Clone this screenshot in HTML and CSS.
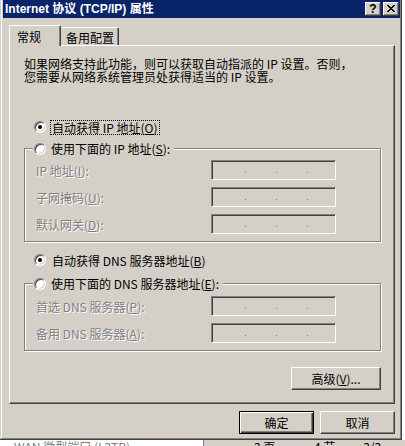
FILE: index.html
```html
<!DOCTYPE html>
<html lang="zh-CN">
<head>
  <meta charset="UTF-8" />
  <title>Internet 协议 (TCP/IP) 属性</title>
  <link rel="stylesheet" href="styles.css">
</head>
<body>

  <div class="window">
    <div class="titlebar">
      <span class="title">Internet 协议 (TCP/IP) 属性</span>
      <div class="cap-buttons">
        <span class="cap-btn help">?</span>
        <span class="cap-btn">
          <svg width="8" height="7" viewBox="0 0 8 7" shape-rendering="crispEdges">
            <path d="M0 0h2v1H0zM6 0h2v1H6zM1 1h2v1H1zM5 1h2v1H5zM2 2h4v1H2zM3 3h2v1H3zM2 4h4v1H2zM1 5h2v1H1zM5 5h2v1H5zM0 6h2v1H0zM6 6h2v1H6z" fill="#000"/>
          </svg>
        </span>
      </div>
    </div>

    <div class="tabs">
      <div class="tab active">常规</div>
      <div class="tab">备用配置</div>
    </div>

    <div class="panel">
      <p class="desc">如果网络支持此功能，则可以获取自动指派的 IP 设置。否则，<br>您需要从网络系统管理员处获得适当的 IP 设置。</p>

      <div class="option first">
        <span class="radio checked"></span>
        <span class="label focus">自动获得 IP 地址(<u>O</u>)</span>
      </div>

      <fieldset class="group">
        <legend><span class="radio"></span><span class="label">使用下面的 IP 地址(<u>S</u>):</span></legend>
        <div class="field">
          <span class="field-label">IP 地址(<u>I</u>):</span>
          <span class="ip-box"><i></i><i></i><i></i></span>
        </div>
        <div class="field">
          <span class="field-label">子网掩码(<u>U</u>):</span>
          <span class="ip-box"><i></i><i></i><i></i></span>
        </div>
        <div class="field">
          <span class="field-label">默认网关(<u>D</u>):</span>
          <span class="ip-box"><i></i><i></i><i></i></span>
        </div>
      </fieldset>

      <div class="option second">
        <span class="radio checked"></span>
        <span class="label">自动获得 DNS 服务器地址(<u>B</u>)</span>
      </div>

      <fieldset class="group dns">
        <legend><span class="radio"></span><span class="label">使用下面的 DNS 服务器地址(<u>E</u>):</span></legend>
        <div class="field">
          <span class="field-label">首选 DNS 服务器(<u>P</u>):</span>
          <span class="ip-box"><i></i><i></i><i></i></span>
        </div>
        <div class="field">
          <span class="field-label">备用 DNS 服务器(<u>A</u>):</span>
          <span class="ip-box"><i></i><i></i><i></i></span>
        </div>
      </fieldset>

      <div class="actions">
        <span class="btn advanced">高级(<u>V</u>)...</span>
      </div>
    </div>

    <div class="dialog-buttons">
      <span class="btn default">确定</span>
      <span class="btn">取消</span>
    </div>
  </div>

  <!-- what is left of the window behind -->
  <div class="under">
    <div class="under-left">WAN 微型端口 (L2TP)</div>
    <div class="under-right">
      <span class="pg">3 页</span>
      <span class="sec">4 节</span>
      <span>3/3</span>
    </div>
  </div>

</body>
</html>
```

FILE: styles.css
```css
body {
  margin: 0;
  background: #fff;
  font-family: "Noto Sans CJK SC", sans-serif;
  font-size: 12px;
  color: #000;
}
u {
  text-decoration: underline;
  text-underline-offset: 1px;
}

/* Ventana */
.window {
  width: 402px;
  height: 440px;
  box-sizing: border-box;
  padding: 0 2px 0 3px;
  background: #d4d0c8;
  box-shadow: inset -1px -1px #404040, inset 1px 0 #d4d0c8, inset -2px -2px #808080, inset 2px 0 #fff;
  overflow: hidden;
}
.titlebar {
  height: 18px;
  background: #0a246a;
  display: flex;
  align-items: center;
  justify-content: space-between;
  padding: 0 1px 0 2px;
}
.title {
  color: #fff;
  font: bold 12px "Liberation Sans", "Noto Sans CJK SC", sans-serif;
  line-height: 18px;
}
.cap-buttons {
  display: flex;
  gap: 2px;
}
.cap-btn {
  width: 16px;
  height: 14px;
  box-sizing: border-box;
  background: #d4d0c8;
  box-shadow: inset -1px -1px #404040, inset 1px 1px #fff, inset -2px -2px #808080;
  display: flex;
  align-items: center;
  justify-content: center;
}
.cap-btn svg {
  margin: 0 1px 1px 0;
}
.help {
  font: bold 12px "Liberation Sans", sans-serif;
  line-height: 14px;
  padding-bottom: 1px;
}

/* Pestañas */
.tabs {
  display: flex;
  align-items: flex-end;
  height: 20px;
  margin: 7px 0 0 6px;
  position: relative;
  z-index: 1;
}
.tab {
  box-sizing: border-box;
  height: 18px;
  width: 58px;
  border-top: 1px solid #fff;
  border-right: 1px solid #404040;
  box-shadow: inset -1px 0 #808080;
  border-radius: 2px 2px 0 0;
  padding: 3px 0 0 5px;
  line-height: 13px;
}
.tab.active {
  height: 21px;
  width: 52px;
  margin-bottom: -1px;
  border-left: 1px solid #fff;
  padding: 4px 0 0 7px;
  background: #d4d0c8;
}

.panel {
  margin-left: 6px;
  width: 386px;
  height: 359px;
  box-sizing: border-box;
  border: 1px solid;
  border-color: #fff #404040 #404040 #fff;
  box-shadow: inset -1px -1px #808080;
}
.desc {
  margin: 11px 0 0 14px;
  line-height: 13px;
}

/* Opciones */
.option {
  display: flex;
  align-items: center;
  gap: 6px;
  height: 16px;
  margin: 10px 0 0 24px;
}
.option.first {
  margin-top: 36px;
  gap: 4px;
}
.radio {
  width: 12px;
  height: 12px;
  box-sizing: border-box;
  border-radius: 50%;
  border: 1px solid;
  border-color: #808080 #fff #fff #808080;
  background: #fff;
  box-shadow: inset 1px 1px #404040, inset -1px -1px #d4d0c8;
  display: flex;
  align-items: center;
  justify-content: center;
  flex: none;
}
.radio.checked::after {
  content: "";
  width: 4px;
  height: 4px;
  border-radius: 50%;
  background: #000;
}
.label {
  line-height: 13px;
  white-space: nowrap;
}
.focus {
  border: 1px dotted #000;
  padding: 0 1px;
}

.group {
  margin: 6px 0 0 14px;
  width: 357px;
  min-inline-size: 0;
  box-sizing: border-box;
  border: 1px solid #808080;
  padding: 0 0 7px 0;
  box-shadow: inset 1px 1px #fff, 1px 1px #fff;
}
.group.dns {
  margin-top: 8px;
}
.group legend {
  display: flex;
  align-items: center;
  gap: 5px;
  height: 15px;
  margin-left: 8px;
  padding: 0 4px 0 1px;
  background: #d4d0c8;
}
.field {
  display: flex;
  align-items: center;
  height: 20px;
  margin: 7px 0 0 11px;
}
.group legend + .field {
  margin-top: 4px;
}
.group.dns legend + .field {
  margin-top: 5px;
}
.field-label {
  width: 175px;
  color: #808080;
  text-shadow: 1px 1px #fff;
  white-space: nowrap;
}
.ip-box {
  width: 125px;
  height: 20px;
  box-sizing: border-box;
  border: 1px solid;
  border-color: #808080 #fff #fff #808080;
  box-shadow: inset 1px 1px #404040, inset -1px -1px #d4d0c8;
  display: flex;
  align-items: flex-start;
  gap: 30px;
  padding: 11px 0 0 33px;
}
.ip-box i {
  width: 1px;
  height: 1px;
  background: #808080;
}

/* Botones */
.btn {
  box-sizing: border-box;
  width: 75px;
  height: 23px;
  background: #d4d0c8;
  border: 1px solid;
  border-color: #fff #404040 #404040 #fff;
  box-shadow: inset -1px -1px #808080;
  display: flex;
  align-items: center;
  justify-content: center;
  line-height: 13px;
}
.btn.default {
  border: 1px solid #000;
  box-shadow: inset 1px 1px #fff, inset -1px -1px #404040, inset -2px -2px #808080;
}
.actions {
  display: flex;
  justify-content: flex-end;
  margin: 16px 13px 0 0;
}
.btn.advanced {
  width: 90px;
}
.dialog-buttons {
  display: flex;
  justify-content: flex-end;
  gap: 6px;
  width: 386px;
  margin: 7px 0 0 6px;
}

/* Fondo debajo */
.under {
  display: flex;
  height: 6px;
  overflow: hidden;
  line-height: 14px;
}
.under-left {
  width: 189px;
  padding-left: 14px;
  color: #808080;
}
.under-right {
  flex: 1;
  background: #d4d0c8;
  border-left: 1px solid #808080;
  padding-left: 50px;
}
.under-right .pg {
  margin-right: 36px;
}
.under-right .sec {
  margin-right: 25px;
}
```
